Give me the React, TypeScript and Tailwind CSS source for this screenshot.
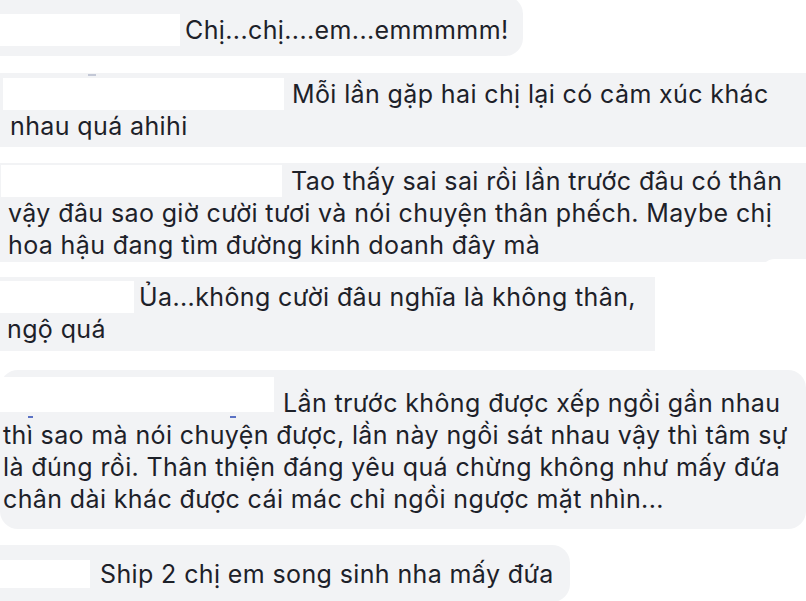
import { JSX } from 'react';

const font = { fontFamily: 'Inter, "Noto Sans", sans-serif' };

function NameBox({ w, h = 32, className = '' }: { w: number; h?: number; className?: string }) {
  return <span className={`inline-block shrink-0 bg-white ${className}`} style={{ width: w, height: h }} />;
}

export default function App(): JSX.Element {
  return (
    <div
      className="h-[601px] w-[806px] overflow-hidden bg-white text-[25px] leading-[32px] tracking-[0.38px] text-[#1d2129]"
      style={font}
    >
      {/* 1 */}
      <div className="-mt-[4px] w-[523px] rounded-r-[18px] bg-[#f2f3f5] pb-[10px] pt-[18px]">
        <div className="flex items-center">
          <NameBox w={180} />
          <span className="ml-[5px] whitespace-nowrap">Chị...chị....em...emmmmm!</span>
        </div>
      </div>

      {/* 2 */}
      <div className="relative mt-[17px] w-[806px] bg-[#f2f3f5] pb-[5px] pl-[10px] pt-[5px]">
        <div className="flex items-center">
          <NameBox w={281} className="-ml-[7px]" />
          <span className="ml-[8px] whitespace-nowrap">Mỗi lần gặp hai chị lại có cảm xúc khác</span>
        </div>
        <div>nhau quá ahihi</div>
        <span className="absolute left-[88px] top-[1px] h-[2px] w-[8px] bg-[#c3c8d6]" />
      </div>

      {/* 3 */}
      <div className="relative mt-[16px] w-[806px] bg-[#f2f3f5] pb-[1px] pl-[8px] pt-[2px]">
        <div className="flex items-center">
          <NameBox w={281} className="-ml-[7px]" />
          <span className="ml-[9px] whitespace-nowrap">Tao thấy sai sai rồi lần trước đâu có thân</span>
        </div>
        <div className="whitespace-nowrap">vậy đâu sao giờ cười tươi và nói chuyện thân phếch. Maybe chị</div>
        <div>hoa hậu đang tìm đường kinh doanh đây mà</div>
        <span className="absolute bottom-[-12px] left-[760px] h-[15px] w-[80px] rounded-tl-[16px] bg-white" />
      </div>

      {/* 4 */}
      <div className="mt-[15px] w-[655px] bg-[#f2f3f5] pb-[6px] pl-[7px] pt-[4px]">
        <div className="flex items-center">
          <NameBox w={134} className="-ml-[7px]" />
          <span className="ml-[5px] whitespace-nowrap">Ủa...không cười đâu nghĩa là không thân,</span>
        </div>
        <div>ngộ quá</div>
      </div>

      {/* 5 */}
      <div className="relative mt-[19px] w-[806px] rounded-[18px] bg-[#f2f3f5] pb-[14px] pl-[3px] pt-[17px]">
        <div className="flex items-center">
          <NameBox w={274} h={35} className="-ml-[3px] -mt-[10px] self-start" />
          <span className="ml-[9px] whitespace-nowrap">Lần trước không được xếp ngồi gần nhau</span>
        </div>
        <div className="whitespace-nowrap">thì sao mà nói chuyện được, lần này ngồi sát nhau vậy thì tâm sự</div>
        <div className="whitespace-nowrap">là đúng rồi. Thân thiện đáng yêu quá chừng không như mấy đứa</div>
        <div className="whitespace-nowrap">chân dài khác được cái mác chỉ ngồi ngược mặt nhìn...</div>
        <span className="absolute left-[230px] top-[46px] h-[2px] w-[6px] bg-[#5b72c4]" />
        <span className="absolute left-[28px] top-[46px] h-[2px] w-[5px] bg-[#5b72c4]" />
      </div>

      {/* 6 */}
      <div className="mt-[16px] w-[570px] rounded-r-[18px] bg-[#f2f3f5] pb-[12px] pt-[13px]">
        <div className="flex items-center">
          <NameBox w={90} h={28} />
          <span className="ml-[10px] whitespace-nowrap">Ship 2 chị em song sinh nha mấy đứa</span>
        </div>
      </div>
    </div>
  );
}
